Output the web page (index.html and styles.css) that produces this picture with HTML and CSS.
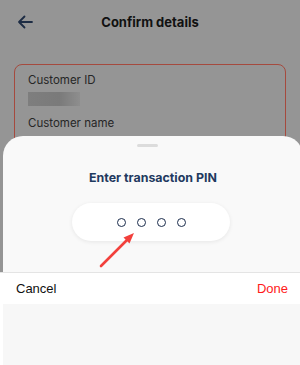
FILE: index.html
```html
<!DOCTYPE html>
<html>
<head>
<meta charset="utf-8">
<link rel="stylesheet" href="styles.css">
</head>
<body>
<div class="page">
  <div class="header">
    <svg class="back" width="16" height="14" viewBox="0 0 16 14"><path d="M15 7H2M7.5 1.5L2 7l5.5 5.5" fill="none" stroke="#1d2c44" stroke-width="1.8" stroke-linecap="round" stroke-linejoin="round"/></svg>
    <div class="title">Confirm details</div>
    <div></div>
  </div>
  <div class="card">
    <div class="label">Customer ID</div>
    <div class="blur"></div>
    <div class="label second">Customer name</div>
  </div>

  <div class="sheet">
    <div class="handle"></div>
    <div class="sheet-title">Enter transaction PIN</div>
    <div class="pill">
      <span class="dot"></span><span class="dot"></span><span class="dot"></span><span class="dot"></span>
    </div>
  </div>

  <svg class="arrow" width="50" height="50" viewBox="0 0 50 50"><path d="M5 40L34 11" stroke="#f2403c" stroke-width="2.6" stroke-linecap="round"/><path d="M38 7L27.5 11.5L33.5 17.5Z" fill="#f2403c"/></svg>

  <div class="keyboard">
    <div class="toolbar"><span class="cancel">Cancel</span><span class="done">Done</span></div>
    <div class="keys"></div>
  </div>
</div>
</body>
</html>
```
FILE: styles.css
```css
* { box-sizing: border-box; }
html, body { margin: 0; padding: 0; }
body { width: 300px; height: 365px; overflow: hidden; font-family: Inter, "Noto Sans", sans-serif; }
.page { position: relative; width: 300px; height: 365px; background: #959595; overflow: hidden; }
.header { height: 44px; display: grid; grid-template-columns: 40px 1fr 40px; align-items: center; }
.back { margin-left: 17px; }
.title { text-align: center; font-weight: 700; font-size: 13px; color: #111; }
.card { margin: 20px 14px 0; border: 1px solid #a54a3e; border-radius: 8px; padding: 8px 13px 40px; height: 120px; }
.label { font-size: 11.5px; color: #262626; line-height: 14px; }
.blur { width: 52px; height: 14px; margin: 5px 0 0 0; background: linear-gradient(90deg, #7e7e7e 0%, #7a7a7a 60%, #8e8e8e 100%); filter: blur(0.6px); }
.second { margin-top: 10px; }
.sheet { position: absolute; top: 136px; left: 3px; width: 300px; bottom: 0; background: #f9f9f9; border-radius: 20px 20px 0 0; display: flex; flex-direction: column; align-items: center; }
.handle { width: 21px; height: 3px; border-radius: 2px; background: #dcdcdc; margin-top: 8px; margin-right: 11px; }
.sheet-title { margin-top: 23px; font-weight: 700; font-size: 12.4px; color: #1f3a60; line-height: 16px; }
.pill { margin-top: 17px; width: 158px; height: 38px; border-radius: 19px; background: #fff; box-shadow: 0 1px 4px rgba(0,0,0,0.08); display: flex; align-items: center; justify-content: center; gap: 11px; margin-right: 4px; }
.dot { width: 9px; height: 9px; border: 1.6px solid #1b2c4c; border-radius: 50%; }
.arrow { position: absolute; left: 96px; top: 226px; }
.keyboard { position: absolute; left: 0; right: 0; top: 272px; bottom: 0; background: #fff; display: flex; flex-direction: column; }
.toolbar { height: 32px; border-top: 1px solid #e4e4e4; display: flex; justify-content: space-between; align-items: center; padding: 0 12px 0 16px; font-family: "Liberation Sans", Arial, sans-serif; font-size: 13px; }
.cancel { color: #111; }
.done { color: #ff1a1a; }
.keys { flex: 1; background: #f7f7f7; margin-left: 3px; }
```
